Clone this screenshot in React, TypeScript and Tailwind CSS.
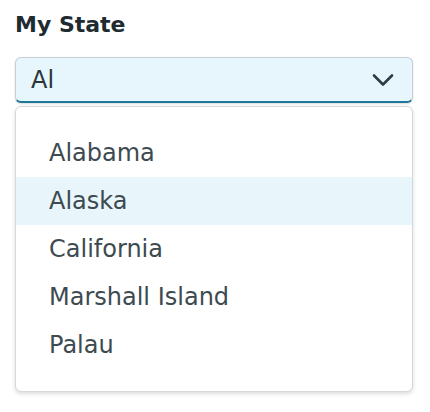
import { useState } from "react";

const states = ["Alabama", "Alaska", "California", "Marshall Island", "Palau"];

function Chevron() {
  return (
    <svg width="22" height="14" viewBox="0 0 22 14" fill="none" className="text-[#2f3b41]">
      <path d="M2 2.5 L11 11.5 L20 2.5" stroke="currentColor" strokeWidth="2.6" strokeLinecap="round" strokeLinejoin="round" />
    </svg>
  );
}

export default function App() {
  const [active] = useState("Alaska");

  return (
    <div className="w-[430px] h-[412px] bg-white pl-[15px] pr-[17px] pt-[12px] font-['DejaVu_Sans',sans-serif]">
      <div className="text-[22px] leading-[26px] font-bold text-[#1e2b31]">My State</div>

      <div className="mt-[19px] h-[46px] flex items-center justify-between rounded-[6px] border border-[#c6cfd4] border-b-[2px] border-b-[#1b7899] bg-[#e7f6fc] pl-[15px] pr-[18px] shadow-[0_1px_2px_rgba(0,0,0,0.15)]">
        <span className="text-[24px] leading-[28px] text-[#2a363c]">Al</span>
        <Chevron />
      </div>

      <ul className="mt-[3px] rounded-[6px] border border-[#d3d9dc] bg-white py-[22px] shadow-[0_2px_4px_rgba(0,0,0,0.14)]">
        {states.map((s) => (
          <li
            key={s}
            className={
              "h-[48px] pl-[33px] text-[24px] leading-[48px] text-[#3d4a50] " +
              (s === active ? "bg-[#e8f6fc]" : "")
            }
          >
            {s}
          </li>
        ))}
      </ul>
    </div>
  );
}
